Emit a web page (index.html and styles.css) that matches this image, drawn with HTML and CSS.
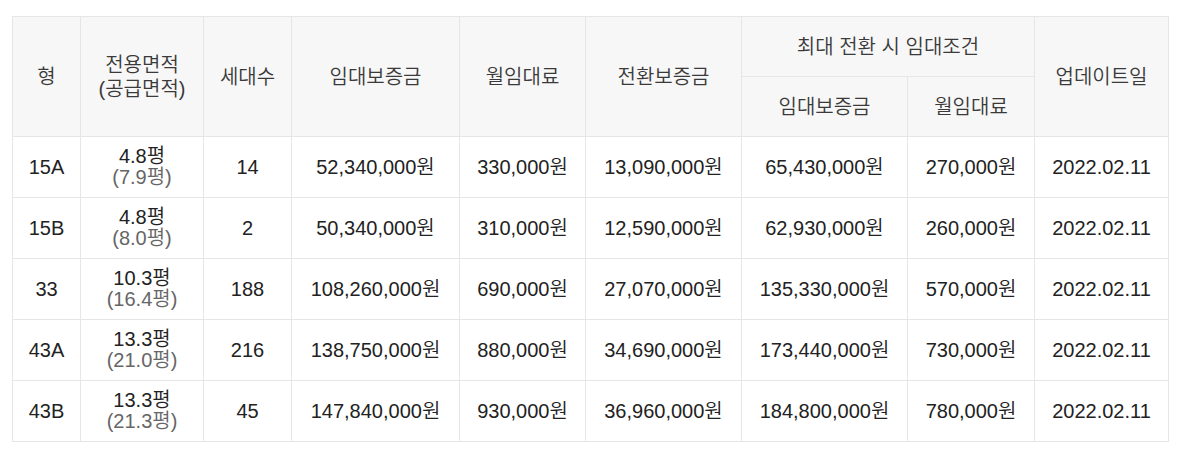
FILE: index.html
```html
<!DOCTYPE html>
<html lang="ko">
<head>
<meta charset="utf-8">
<link rel="stylesheet" href="styles.css">
</head>
<body>
<div class="wrap">
<table class="rent">
  <colgroup>
    <col class="c1"><col class="c2"><col class="c3"><col class="c4"><col class="c5"><col class="c6"><col class="c7"><col class="c8"><col class="c9">
  </colgroup>
  <thead>
    <tr class="h1">
      <th rowspan="2">형</th>
      <th rowspan="2">전용면적<br>(공급면적)</th>
      <th rowspan="2">세대수</th>
      <th rowspan="2">임대보증금</th>
      <th rowspan="2">월임대료</th>
      <th rowspan="2">전환보증금</th>
      <th colspan="2">최대 전환 시 임대조건</th>
      <th rowspan="2">업데이트일</th>
    </tr>
    <tr class="h2">
      <th>임대보증금</th>
      <th>월임대료</th>
    </tr>
  </thead>
  <tbody>
    <tr><td>15A</td><td><span class="main">4.8평</span><span class="sub">(7.9평)</span></td><td>14</td><td>52,340,000원</td><td>330,000원</td><td>13,090,000원</td><td>65,430,000원</td><td>270,000원</td><td>2022.02.11</td></tr>
    <tr><td>15B</td><td><span class="main">4.8평</span><span class="sub">(8.0평)</span></td><td>2</td><td>50,340,000원</td><td>310,000원</td><td>12,590,000원</td><td>62,930,000원</td><td>260,000원</td><td>2022.02.11</td></tr>
    <tr><td>33</td><td><span class="main">10.3평</span><span class="sub">(16.4평)</span></td><td>188</td><td>108,260,000원</td><td>690,000원</td><td>27,070,000원</td><td>135,330,000원</td><td>570,000원</td><td>2022.02.11</td></tr>
    <tr><td>43A</td><td><span class="main">13.3평</span><span class="sub">(21.0평)</span></td><td>216</td><td>138,750,000원</td><td>880,000원</td><td>34,690,000원</td><td>173,440,000원</td><td>730,000원</td><td>2022.02.11</td></tr>
    <tr><td>43B</td><td><span class="main">13.3평</span><span class="sub">(21.3평)</span></td><td>45</td><td>147,840,000원</td><td>930,000원</td><td>36,960,000원</td><td>184,800,000원</td><td>780,000원</td><td>2022.02.11</td></tr>
  </tbody>
</table>
</div>
</body>
</html>
```

FILE: styles.css
```css
html, body {
  margin: 0;
  padding: 0;
  background: #ffffff;
}

.wrap {
  padding: 16px 19px 0 12px;
}

.rent {
  width: 1156px;
  table-layout: fixed;
  border-collapse: collapse;
  font-family: "Liberation Sans", Arial, "Noto Sans CJK KR", sans-serif;
  font-size: 20px;
  font-weight: 350;
  color: #222222;
  border-top: 1px solid #c8c8c8;
}

.c1 { width: 68px; }
.c2 { width: 123px; }
.c3 { width: 88px; }
.c4 { width: 168px; }
.c5 { width: 126px; }
.c6 { width: 156px; }
.c7 { width: 166px; }
.c8 { width: 127px; }
.c9 { width: 134px; }

.rent th,
.rent td {
  border: 1px solid #e6e6e6;
  text-align: center;
  vertical-align: middle;
  padding: 0;
}

.rent th {
  background: #f7f7f7;
  font-weight: 350;
  color: #3a3a3a;
  line-height: 24px;
}

.rent tr.h1 th,
.rent tr.h2 th {
  height: 59px;
}

.rent td {
  height: 60px;
  line-height: 21px;
}

.rent .main {
  display: block;
}

.rent .sub {
  display: block;
  color: #666666;
}
```
